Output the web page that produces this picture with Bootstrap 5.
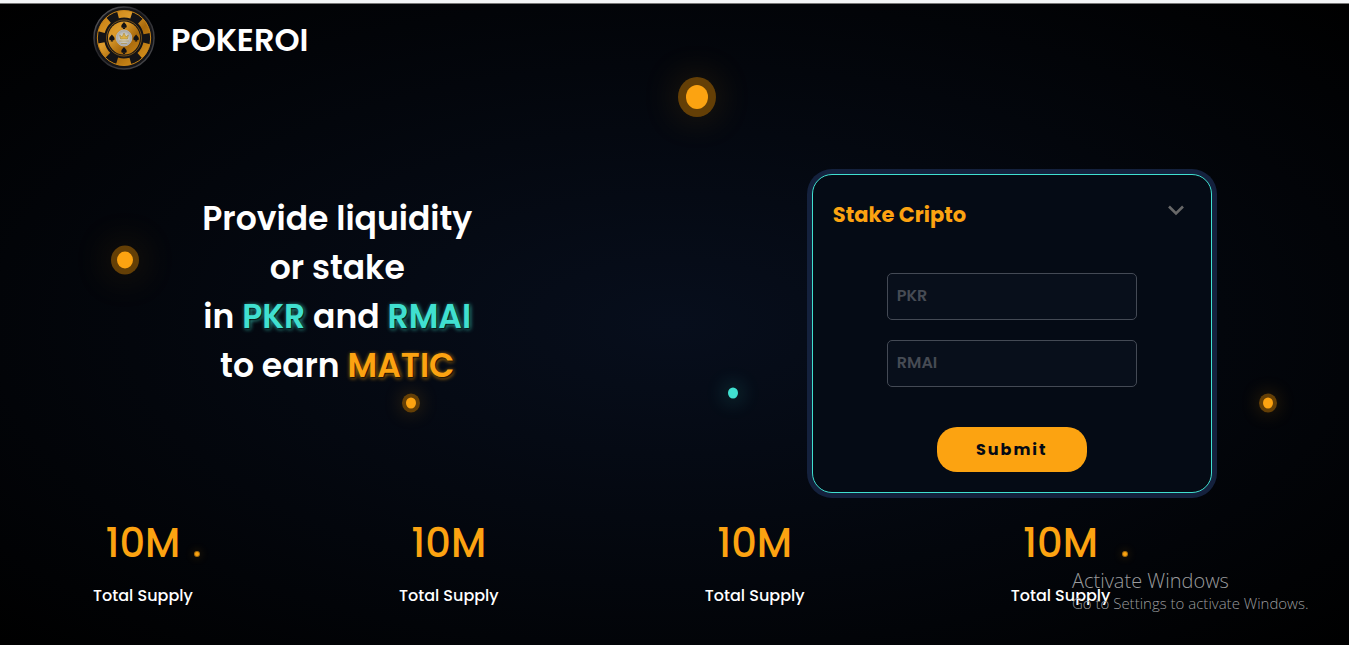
<!DOCTYPE html>
<html lang="en">
<head>
<meta charset="utf-8">
<meta name="viewport" content="width=device-width, initial-scale=1">
<title>POKEROI</title>
<link href="https://cdn.jsdelivr.net/npm/bootstrap@5.3.0/dist/css/bootstrap.min.css" rel="stylesheet">
<style>
  :root { --gold: #fca311; --aqua: #40e0d0; --navy: #14213d; }
  body {
    font-family: Poppins, Inter, "Liberation Sans", sans-serif;
    background: #000;
    color: #fff;
    font-weight: 500;
  }
  .page {
    min-height: 100vh;
    border-top: 3px solid #f3f5f7;
    background: radial-gradient(ellipse at center, #070e1c 0%, #000 100%);
    overflow: hidden;
  }
  .page::before { content: ""; height: 1px; background: #777; }
  .gutter { padding-left: 6.9vw; padding-right: 2.4vw; }
  .brand { gap: 16px; padding-top: 2px; color: #fff; }
  .brand-name { font-size: 32px; line-height: 40px; font-weight: 600; padding-top: 4px; }
  .hero { padding-top: 97px; }
  .hero-title { font-size: 33px; line-height: 49px; font-weight: 600; padding-top: 20px; }
  .glow-aqua { color: var(--aqua); text-shadow: 1px 1px 2px #000, 1px 1px 4px var(--aqua); }
  .glow-gold { color: var(--gold); text-shadow: 1px 1px 2px #000, 1px 1px 4px var(--gold); }
  .stake {
    width: 400px;
    max-width: 90%;
    padding: 20px;
    background: #050b15;
    border: 1px solid var(--aqua);
    border-radius: 20px;
    box-shadow: 0 0 0 5px var(--navy);
  }
  .stake-title { font-size: 21px; line-height: 40px; font-weight: 700; color: var(--gold); }
  .stake-toggle { border: 0; background: none; padding: 7px 7px; line-height: 1; }
  .fields { width: 250px; gap: 20px; padding-top: 38px; }
  .fields .form-control {
    height: 47px;
    padding: 0 9px 2px;
    font-weight: 600;
    font-size: 16px;
    color: #fff;
    background: #080f1b;
    border: 1px solid #444a55;
    border-radius: 5px;
  }
  .fields .form-control::placeholder { color: #464b54; }
  .submit {
    width: 150px; height: 45px; margin-top: 40px;
    background: var(--gold); color: #040a15;
    border: 0; border-radius: 20px;
    font-size: 16px; font-weight: 700; letter-spacing: 2px;
  }
  .stats { padding-top: 26px; padding-bottom: 35px; }
  .figure-value { font-size: 40px; line-height: 48px; font-weight: 500; color: var(--gold); margin-bottom: 17px; }
  .figure-label { font-size: 16px; line-height: 24px; }
  .spark {
    position: absolute; border-radius: 50%; background: var(--gold);
    transform: translate(-50%, -50%);
    box-shadow: 0 0 0 var(--ring) #643f06, 0 0 40px 3px rgba(252,163,17,.3);
  }
  .spark-lg { width: 22px; height: 24px; --ring: 8px; }
  .spark-md { width: 16px; height: 17px; --ring: 6px; }
  .spark-sm { width: 10px; height: 11px; --ring: 4px; box-shadow: 0 0 0 4px #643f06, 0 0 20px 3px rgba(252,163,17,.3); }
  .spark-xs { width: 4px; height: 4px; box-shadow: 0 0 0 1px #a86d0c, 0 0 10px 1px rgba(252,163,17,.3); }
  .spark-aqua { width: 10px; height: 11px; background: var(--aqua); box-shadow: 0 0 20px 4px rgba(64,224,208,.2); }
  .watermark {
    position: absolute; right: 3%; bottom: 32px;
    font-family: "Segoe UI", "Open Sans", sans-serif;
    font-weight: 300; color: #9a9b9d;
  }
  .watermark-title { font-size: 20px; line-height: 24px; }
  .watermark-text { font-size: 15px; line-height: 20px; }
</style>
</head>
<body>
<div class="page position-relative d-flex flex-column">
  <header class="gutter">
    <a href="#" class="brand d-inline-flex align-items-center text-decoration-none">
      <svg width="62" height="64" viewBox="0 0 64 64" preserveAspectRatio="none" aria-hidden="true">
        <defs>
          <linearGradient id="rim" x1="0" y1="0" x2="1" y2="1"><stop offset="0" stop-color="#66666a"/><stop offset=".4" stop-color="#26262a"/><stop offset="1" stop-color="#4c4c50"/></linearGradient>
          <linearGradient id="metal" gradientUnits="userSpaceOnUse" x1="8" y1="8" x2="56" y2="56"><stop offset="0" stop-color="#c47c10"/><stop offset=".35" stop-color="#dd9c2c"/><stop offset=".6" stop-color="#a8690c"/><stop offset="1" stop-color="#dc961e"/></linearGradient>
          <radialGradient id="silver"><stop offset="0" stop-color="#f5f1e0"/><stop offset="1" stop-color="#a2a2a2"/></radialGradient>
          <path id="suit" d="M0-3.500C-1-2-2.800-1-2.800.8c0 1.600 1.600 2 2.400.9L-1.300 3.500h2.600L.4 1.700c.8 1.100 2.400.7 2.400-.9C2.800-1 1-2 0-3.500z"/>
        </defs>
        <circle cx="32" cy="32" r="31" fill="#151518" stroke="url(#rim)" stroke-width="1.500"/>
        <circle cx="32" cy="32" r="27.500" fill="#131316"/>
        <circle cx="32" cy="32" r="24" fill="none" stroke="url(#metal)" stroke-width="7" stroke-dasharray="14.130 11" stroke-dashoffset="-5.500"/>
        <circle cx="32" cy="32" r="27.500" fill="none" stroke="#c98518" stroke-width="1"/>
        <circle cx="32" cy="32" r="18" fill="none" stroke="#8f6118" stroke-width=".8"/>
        <circle cx="32" cy="32" r="16.500" fill="url(#metal)"/>
        <g fill="#121215">
          <use href="#suit" x="32" y="19.500"/><use href="#suit" x="32" y="44.500"/>
          <use href="#suit" x="19.500" y="32"/><use href="#suit" x="44.500" y="32"/>
        </g>
        <circle cx="32" cy="32" r="8" fill="url(#silver)" stroke="#b5b5b5"/>
        <path d="M27 35h10M28.500 33l-1-4 2.500 2 2-4 2 4 2.500-2-1 4zM29 37.500h6" fill="#e0b344" stroke="#b0924c" stroke-width=".8"/>
      </svg>
      <span class="brand-name">POKEROI</span>
    </a>
  </header>

  <main class="hero row g-0">
    <section class="col-md-6 text-center">
      <h1 class="hero-title mb-0">Provide liquidity<br>or stake<br>in <span class="glow-aqua">PKR</span> and <span class="glow-aqua">RMAI</span><br>to earn <span class="glow-gold">MATIC</span></h1>
    </section>
    <section class="col-md-6 d-flex justify-content-center">
      <form class="stake d-flex flex-column align-items-center">
        <div class="w-100 d-flex justify-content-between align-items-start">
          <h2 class="stake-title mb-0">Stake Cripto</h2>
          <button type="button" class="stake-toggle" aria-label="Toggle form">
            <svg class="d-block" width="16" height="16" viewBox="0 0 16 16" fill="none" stroke="#686868" stroke-width="2.600"><path d="M1 4.500l7 7 7-7"/></svg>
          </button>
        </div>
        <div class="fields d-flex flex-column">
          <input class="form-control" type="text" placeholder="PKR" aria-label="PKR">
          <input class="form-control" type="text" placeholder="RMAI" aria-label="RMAI">
        </div>
        <button type="submit" class="submit">Submit</button>
      </form>
    </section>
  </main>

  <section class="stats gutter">
    <div class="row row-cols-2 row-cols-md-4 g-0">
      <div class="col"><div class="d-inline-block text-center"><div class="figure-value">10M</div><div class="figure-label">Total Supply</div></div></div>
      <div class="col"><div class="d-inline-block text-center"><div class="figure-value">10M</div><div class="figure-label">Total Supply</div></div></div>
      <div class="col"><div class="d-inline-block text-center"><div class="figure-value">10M</div><div class="figure-label">Total Supply</div></div></div>
      <div class="col"><div class="d-inline-block text-center"><div class="figure-value">10M</div><div class="figure-label">Total Supply</div></div></div>
    </div>
  </section>

  <span class="spark spark-lg" style="left:51.7%;top:14.7%"></span>
  <span class="spark spark-md" style="left:9.3%;top:40%"></span>
  <span class="spark spark-sm" style="left:30.5%;top:62.3%"></span>
  <span class="spark spark-aqua" style="left:54.3%;top:60.8%"></span>
  <span class="spark spark-sm" style="left:94%;top:62.3%"></span>
  <span class="spark spark-xs" style="left:14.6%;top:85.9%"></span>
  <span class="spark spark-xs" style="left:83.4%;top:85.9%"></span>

  <div class="watermark">
    <div class="watermark-title">Activate Windows</div>
    <div class="watermark-text">Go to Settings to activate Windows.</div>
  </div>
</div>
<script src="https://cdn.jsdelivr.net/npm/bootstrap@5.3.0/dist/js/bootstrap.bundle.min.js"></script>
</body>
</html>
